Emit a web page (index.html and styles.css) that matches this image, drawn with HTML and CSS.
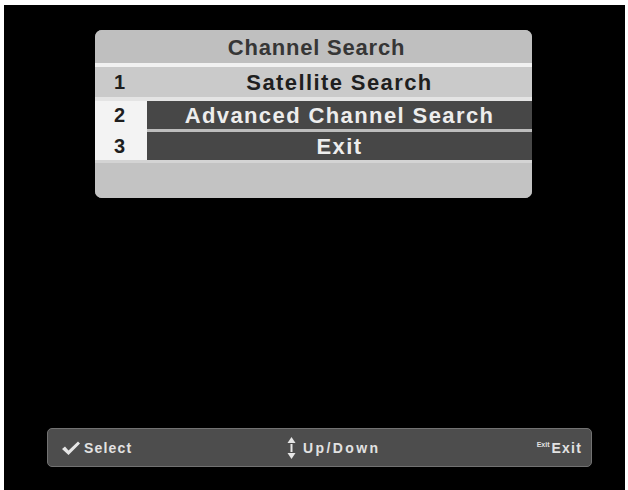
FILE: index.html
```html
<!DOCTYPE html>
<html lang="en">
<head>
    <meta charset="UTF-8">
    <meta name="viewport" content="width=device-width, initial-scale=1.0">
    <title>Channel Search</title>
    <link rel="stylesheet" href="styles.css">
</head>
<body>
    <div class="pantalla">
        <div class="menu">
            <div class="titulo">Channel Search</div>
            <div class="linea-blanca"></div>
            <div class="fila fila-activa">
                <div class="numero">1</div>
                <div class="texto">Satellite Search</div>
            </div>
            <div class="sep-clara"></div>
            <div class="grupo">
                <div class="fila">
                    <div class="numero">2</div>
                    <div class="texto">Advanced Channel Search</div>
                </div>
                <div class="sep-gris"></div>
                <div class="fila">
                    <div class="numero">3</div>
                    <div class="texto">Exit</div>
                </div>
            </div>
            <div class="linea-abajo"></div>
            <div class="relleno"></div>
        </div>

        <div class="pie">
            <div class="pie-item">
                <svg class="icono-check" width="20" height="16" viewBox="0 0 20 16">
                    <path d="M1 9 L4 6.5 L7.5 10.5 L17 1.5 L19 3.5 L7.5 15 Z" fill="#e6e6e6"/>
                </svg>
                <span>Select</span>
            </div>
            <div class="pie-item">
                <svg class="icono-flechas" width="9" height="22" viewBox="0 0 9 22">
                    <path d="M4.5 0 L8.5 6 L0.5 6 Z" fill="#e6e6e6"/>
                    <rect x="3.5" y="7" width="2" height="8" fill="#e6e6e6"/>
                    <path d="M4.5 22 L8.5 16 L0.5 16 Z" fill="#e6e6e6"/>
                </svg>
                <span class="ancho">Up/Down</span>
            </div>
            <div class="pie-item pie-derecha">
                <span class="tecla">Exit</span>
                <span>Exit</span>
            </div>
        </div>
    </div>
</body>
</html>
```

FILE: styles.css
```css
* {
    box-sizing: border-box;
    padding: 0;
    margin: 0;
}

html,
body {
    width: 628px;
    height: 490px;
    overflow: hidden;
}

body {
    background-color: #fff;
    font-family: "Liberation Sans", Arial, sans-serif;
    padding: 5px 3px 0 4px;
}

.pantalla {
    background-color: #000;
    height: 485px;
    padding-top: 25px;
}

.menu {
    width: 437px;
    margin-left: 91px;
    background-color: #c2c2c2;
    border-radius: 7px;
    overflow: hidden;
}

.titulo {
    height: 33px;
    line-height: 35px;
    text-align: center;
    font-size: 22px;
    font-weight: bold;
    letter-spacing: 0.8px;
    color: #363636;
    background-color: #bfbfbf;
    padding-left: 6px;
}

.linea-blanca {
    height: 4px;
    background-color: #f1f1f1;
}

.fila {
    display: flex;
    height: 28px;
}

.fila-activa {
    height: 30px;
    background-color: #cacaca;
}

.numero {
    width: 52px;
    padding-left: 19px;
    font-size: 20px;
    font-weight: bold;
    line-height: 29px;
    color: #1e1e1e;
    background-color: #f3f3f3;
}

.fila-activa .numero {
    background-color: transparent;
    line-height: 31px;
}

.texto {
    flex: 1;
    text-align: center;
    font-size: 22px;
    font-weight: bold;
    letter-spacing: 1.4px;
    line-height: 29px;
    color: #ededed;
    background-color: #474747;
}

.fila-activa .texto {
    background-color: transparent;
    color: #1f1f1f;
    line-height: 31px;
}

.sep-clara {
    height: 4px;
    background-color: #e4e4e4;
}

.grupo {
    background-color: #f3f3f3;
}

.sep-gris {
    height: 3px;
    margin-left: 52px;
    background-color: #bdbdbd;
}

.linea-abajo {
    height: 3px;
    background-color: #d4d4d4;
}

.relleno {
    height: 35px;
    background-color: #c3c3c3;
}

.pie {
    display: grid;
    grid-template-columns: 226px auto 1fr;
    align-items: center;
    width: 545px;
    height: 39px;
    margin-top: 230px;
    margin-left: 43px;
    padding: 0 9px 0 13px;
    background-color: #4d4d4d;
    border: 1px solid #727272;
    border-radius: 5px;
    color: #e2e2e2;
    font-size: 14px;
    font-weight: bold;
    letter-spacing: 1.2px;
}

.pie-item {
    display: flex;
    align-items: center;
    gap: 3px;
}

.icono-flechas {
    margin-right: 4px;
}

.ancho {
    letter-spacing: 2.4px;
}

.pie-derecha {
    justify-self: end;
    gap: 2px;
}

.tecla {
    font-size: 7px;
    letter-spacing: 0;
    margin-top: -7px;
}
```
